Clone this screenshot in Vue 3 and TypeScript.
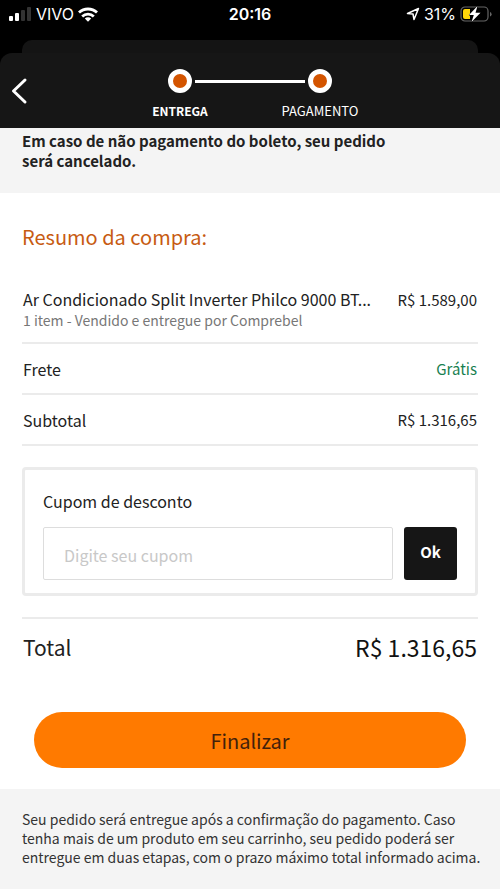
<script setup lang="ts">
import { ref } from 'vue'

interface Row {
  label: string
  value: string
  free?: boolean
}

const steps: string[] = ['ENTREGA', 'PAGAMENTO']
const rows: Row[] = [
  { label: 'Frete', value: 'Grátis', free: true },
  { label: 'Subtotal', value: 'R$ 1.316,65' },
]
const coupon = ref('')
</script>

<template>
  <div class="screen">
    <div class="status">
      <div class="status-side">
        <svg class="signal" width="24" height="14" viewBox="0 0 24 14" aria-hidden="true">
          <rect x="1" y="9" width="4" height="5" rx="1" fill="#fff" />
          <rect x="7" y="6" width="4" height="8" rx="1" fill="#fff" />
          <rect x="13" y="3" width="4" height="11" rx="1" fill="#333" />
          <rect x="19" y="0" width="4" height="14" rx="1" fill="#333" />
        </svg>
        <span>VIVO</span>
        <svg width="20" height="15" viewBox="0 0 20 15" fill="none" stroke="#fff" stroke-width="2.8" aria-hidden="true">
          <path d="M1 5.600a13 13 0 0 1 18 0" />
          <path d="M4.200 9.500a8.400 8.400 0 0 1 11.600 0" />
          <path d="M10 14.800l-3.200-3.300a4.600 4.600 0 0 1 6.400 0z" fill="#fff" stroke="none" />
        </svg>
      </div>
      <span class="clock">20:16</span>
      <div class="status-side right">
        <svg width="14" height="14" viewBox="0 0 14 14" fill="none" stroke="#fff" stroke-width="1.5" stroke-linejoin="round" aria-hidden="true">
          <path d="M1.500 6.500L12.500 1.500 8 12.500 7 7z" />
        </svg>
        <span>31%</span>
        <svg width="32" height="18" viewBox="0 0 32 18" aria-hidden="true">
          <rect x="1" y="2" width="27" height="14" rx="4" fill="none" stroke="#666" stroke-width="1.2" />
          <path d="M30 7v4.500q1.600-.6 1.600-2.250T30 7z" fill="#666" />
          <path d="M5 4h5v10H5q-2 0-2-2V6q0-2 2-2z" fill="#ffd60a" />
          <path d="M17.500 1L9 10h4.800l-2.300 7L20.500 7.700h-5z" fill="#fff" stroke="#000" stroke-width="1" paint-order="stroke" />
        </svg>
      </div>
    </div>

    <div class="back-sheet"></div>
    <header class="header">
      <button class="back" type="button" aria-label="Voltar">
        <svg width="18" height="28" viewBox="0 0 18 28" fill="none" stroke="#fff" stroke-width="3" stroke-linecap="round" stroke-linejoin="round">
          <path d="M14 3L2.500 14 14 25" />
        </svg>
      </button>
      <ol class="steps">
        <li v-for="(step, i) in steps" :key="step" class="step" :class="{ current: i === 0 }">
          <span class="dot"></span>
          <span>{{ step }}</span>
        </li>
      </ol>
    </header>

    <main>
      <p class="notice">Em caso de não pagamento do boleto, seu pedido<br />será cancelado.</p>

      <section class="summary">
        <h1>Resumo da compra:</h1>
        <div class="item">
          <div class="line">
            <span class="name">Ar Condicionado Split Inverter Philco 9000 BT...</span>
            <span class="price">R$ 1.589,00</span>
          </div>
          <small>1 item - Vendido e entregue por Comprebel</small>
        </div>
        <div v-for="row in rows" :key="row.label" class="line row">
          <span>{{ row.label }}</span>
          <span class="price" :class="{ free: row.free }">{{ row.value }}</span>
        </div>

        <form class="coupon" @submit.prevent>
          <label for="coupon">Cupom de desconto</label>
          <div class="fields">
            <input id="coupon" v-model="coupon" type="text" placeholder="Digite seu cupom" />
            <button type="submit">Ok</button>
          </div>
        </form>

        <div class="line total">
          <span>Total</span>
          <span class="amount">R$ 1.316,65</span>
        </div>
        <button class="finish" type="button">Finalizar</button>
      </section>
    </main>

    <footer>
      Seu pedido será entregue após a confirmação do pagamento. Caso<br />
      tenha mais de um produto em seu carrinho, seu pedido poderá ser<br />
      entregue em duas etapas, com o prazo máximo total informado acima.
    </footer>
  </div>
</template>

<style>
body {
  margin: 0;
  background: #000;
}
</style>

<style scoped>
.screen {
  display: flex;
  flex-direction: column;
  min-height: 100vh;
  background: #000;
  color: #222;
  font-family: 'Noto Sans CJK SC', 'Noto Sans', sans-serif;
  font-size: 16px;
}
.screen * {
  box-sizing: border-box;
}
button,
input {
  font: inherit;
}
.status {
  display: flex;
  align-items: center;
  height: 28px;
  margin-bottom: 12px;
  padding: 0 8px;
  color: #fff;
  font-family: Inter, sans-serif;
}
.status-side {
  display: flex;
  flex: 1;
  align-items: center;
  gap: 4px;
}
.right {
  justify-content: flex-end;
}
.clock {
  font-weight: 600;
}
.back-sheet {
  height: 13px;
  margin: 0 22px;
  border-radius: 10px 10px 0 0;
  background: #141414;
}
.header {
  display: grid;
  grid-template-columns: 80px 1fr 80px;
  height: 75px;
  border-radius: 12px 12px 0 0;
  background: #161616;
  color: #fff;
}
.back {
  display: flex;
  align-items: center;
  padding: 0 0 0 11px;
  border: 0;
  background: none;
}
.steps {
  display: flex;
  justify-content: center;
  margin: 0;
  padding: 16px 0 0;
  list-style: none;
  font-size: 13px;
  line-height: 16px;
}
.step {
  position: relative;
  display: flex;
  flex-direction: column;
  align-items: center;
  gap: 10px;
  width: 140px;
}
.current {
  font-size: 12px;
  font-weight: 700;
}
.current::after {
  position: absolute;
  top: 11px;
  left: 85px;
  width: 110px;
  height: 3px;
  background: #fff;
  content: '';
}
.dot {
  width: 24px;
  height: 24px;
  border: 5px solid #fff;
  border-radius: 50%;
  background: #d35400;
}
main {
  background: #fff;
}
.notice {
  margin: 0;
  padding: 3px 22px 22px;
  background: #f4f4f4;
  font-size: 15px;
  font-weight: 700;
  line-height: 20px;
}
.summary {
  padding: 30px 22px 21px;
}
h1 {
  margin: 0 0 36px;
  color: #c75b12;
  font-size: 20px;
  font-weight: 400;
  line-height: 28px;
}
.line {
  display: flex;
  align-items: center;
  justify-content: space-between;
}
.item,
.row {
  padding: 0 1px;
  border-bottom: 2px solid #ebebeb;
}
.item {
  padding-bottom: 12px;
}
.name {
  white-space: nowrap;
  line-height: 24px;
}
small {
  display: block;
  color: #777;
  font-size: 14px;
  line-height: 19px;
}
.row {
  height: 51px;
}
.price {
  flex: none;
  font-size: 15px;
}
.free {
  color: #188050;
}
.coupon {
  margin: 21px 0;
  padding: 19px 18px 13px;
  border: 3px solid #ebebeb;
  border-radius: 4px;
}
.coupon label {
  display: block;
  margin-bottom: 14px;
  line-height: 24px;
}
.fields {
  display: flex;
  gap: 11px;
}
.fields input {
  flex: 1;
  min-width: 0;
  height: 53px;
  padding: 2px 20px 0;
  border: 1px solid #ddd;
  border-radius: 2px;
  outline: 0;
  color: #222;
}
.fields input::placeholder {
  color: #c8c8c8;
  opacity: 1;
}
.fields button {
  width: 53px;
  height: 53px;
  padding: 0 0 4px;
  border: 0;
  border-radius: 3px;
  background: #161616;
  color: #fff;
  font-size: 15px;
  font-weight: 700;
}
.total {
  padding: 12px 1px 2px;
  border-top: 2px solid #ebebeb;
  font-size: 21px;
  line-height: 32px;
}
.amount {
  color: #111;
  font-size: 23px;
}
.finish {
  display: block;
  width: calc(100% - 24px);
  height: 56px;
  margin: 47px 12px 0;
  border: 0;
  border-radius: 28px;
  background: #ff7a00;
  color: #43210b;
  font-size: 20px;
}
footer {
  flex: 1;
  padding: 21px 16px 20px 22px;
  background: #f4f4f4;
  color: #333;
  font-size: 14px;
  line-height: 19px;
}
</style>
